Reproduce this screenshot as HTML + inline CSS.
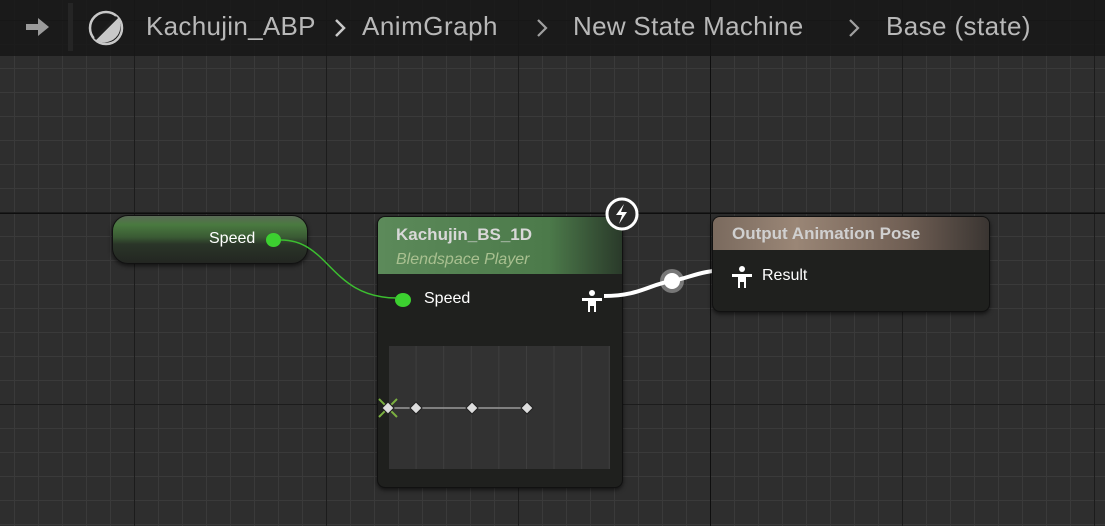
<!DOCTYPE html>
<html><head><style>
body{margin:0;width:1105px;height:526px;overflow:hidden;font-family:"Liberation Sans",sans-serif;position:relative;
background-color:#2e2e2e;
background-image:
linear-gradient(90deg,#1c1c1c 1px,transparent 1px),
linear-gradient(0deg,#1c1c1c 1px,transparent 1px),
linear-gradient(90deg,#3a3a3a 1px,transparent 1px),
linear-gradient(0deg,#3a3a3a 1px,transparent 1px);
background-size:192px 192px,192px 192px,24px 24px,24px 24px;
background-position:134px 0,0 21px,14px 0,0 21px;}
.abs{position:absolute}
.top{left:0;top:0;width:1105px;height:56px;background:rgba(22,22,22,.82);color:#b8b8b8;font-size:26px}
.top span{position:absolute;top:11px}
.chev{position:absolute;top:17px}
.node{position:absolute;background:#1f201e;border:1px solid #111;border-radius:8px;box-shadow:0 2px 4px rgba(0,0,0,.6)}
</style></head><body>
<div class="abs" style="left:710px;top:0;width:1px;height:526px;background:#0e0e0e"></div>
<div class="abs" style="left:0;top:213px;width:1105px;height:1px;background:#0e0e0e"></div>
<div class="abs top">
 <svg class="abs" style="left:24px;top:16px" width="28" height="22"><path d="M2 8h12V2l11 9-11 9v-6H2z" fill="#9a9a9a"/></svg>
 <div class="abs" style="left:68px;top:3px;width:5px;height:48px;background:#252525"></div>
 <svg class="abs" style="left:87px;top:9px" width="38" height="38"><circle cx="19" cy="19" r="16" fill="none" stroke="#c8c8c8" stroke-width="2.5"/><path d="M31 9 A16 16 0 0 1 9 31z" fill="#c8c8c8"/><line x1="8" y1="30" x2="30" y2="8" stroke="#1e1e1e" stroke-width="3"/></svg>
 <span style="left:146px;letter-spacing:0.3px">Kachujin_ABP</span>
 <svg class="chev" style="left:333px" width="14" height="22"><path d="M3 3l8 8-8 8" stroke="#c8c8c8" stroke-width="2.5" fill="none"/></svg>
 <span style="left:362px;letter-spacing:0.5px">AnimGraph</span>
 <svg class="chev" style="left:535px" width="14" height="22"><path d="M3 3l8 8-8 8" stroke="#a0a0a0" stroke-width="2.2" fill="none"/></svg>
 <span style="left:573px;letter-spacing:0.3px">New State Machine</span>
 <svg class="chev" style="left:847px" width="14" height="22"><path d="M3 3l8 8-8 8" stroke="#a0a0a0" stroke-width="2.2" fill="none"/></svg>
 <span style="left:886px;letter-spacing:0.4px">Base (state)</span>
</div>
<div class="abs" style="left:112px;top:215px;width:194px;height:47px;border-radius:16px;border:1px solid #111;background:linear-gradient(180deg,#5a6a56 0%,#4a7a40 18%,#3a5a34 45%,#2a3528 60%,#232622 100%);box-shadow:0 2px 4px rgba(0,0,0,.6)"></div>
<div class="abs" style="left:209px;top:230px;color:#fff;font-size:16px">Speed</div>
<div class="abs" style="left:266px;top:233px;width:15px;height:14px;border-radius:50%;background:#3cd030"></div>
<div class="node" style="left:377px;top:216px;width:244px;height:270px">
 <div style="height:57px;border-radius:7px 7px 0 0;background:linear-gradient(90deg,#5c8a5a,#4c7a4a 70%,#2a3a2a)"></div>
 <div class="abs" style="left:18px;top:8px;color:#d8d8d8;font-weight:bold;font-size:17px">Kachujin_BS_1D</div>
 <div class="abs" style="left:18px;top:34px;color:#a9c090;font-style:italic;font-size:16px">Blendspace Player</div>
 <div class="abs" style="left:17px;top:76px;width:16px;height:14px;border-radius:50%;background:#3cd030"></div>
 <div class="abs" style="left:46px;top:73px;color:#fff;font-size:16px">Speed</div>
 <svg class="abs" style="left:203px;top:72px" width="22" height="24"><circle cx="11" cy="4" r="3" fill="#fff"/><path d="M1 9h20v3h-6v11h-2v-6h-4v6H7V12H1z" fill="#fff"/></svg>
 <div class="abs" style="left:11px;top:129px;width:221px;height:123px;background:#323232;background-image:linear-gradient(90deg,#3e3e3e 1px,transparent 1px);background-size:27.6px 100%;background-position:-1px 0"></div>
 <svg class="abs" style="left:0;top:176px" width="170" height="30"><line x1="10" y1="15" x2="150" y2="15" stroke="#999" stroke-width="1.5"/><path d="M1 6l18 18M19 6L1 24" stroke="#7bb040" stroke-width="2"/><g fill="#ddd" stroke="#222"><path d="M10 9l6 6-6 6-6-6z"/><path d="M38 9l6 6-6 6-6-6z"/><path d="M94 9l6 6-6 6-6-6z"/><path d="M149 9l6 6-6 6-6-6z"/></g></svg>
</div>
<svg class="abs" style="left:0;top:0" width="1105" height="526">
 <path d="M281 240 C330 240 330 298 397 298" stroke="#3cbf30" stroke-width="1.5" fill="none"/>
 <path d="M604 296 C640 296 650 284 672 281 C690 278 700 270 730 270" stroke="#fff" stroke-width="4" fill="none"/>
 <circle cx="672" cy="281" r="12" fill="#fff" opacity=".35"/><circle cx="672" cy="281" r="8" fill="#fff"/>
</svg>
<svg class="abs" style="left:603px;top:195px" width="38" height="38"><circle cx="19" cy="19" r="15" fill="#2a2a2a" stroke="#fff" stroke-width="3"/><path d="M21 9l-8 11h6l-3 9 8-12h-6z" fill="#fff"/></svg>
<div class="node" style="left:712px;top:216px;width:276px;height:94px">
 <div style="height:33px;border-radius:7px 7px 0 0;background:linear-gradient(90deg,#7a6a5e,#9a8676 30%,#705f54 70%,#3a3532)"></div>
 <div class="abs" style="left:19px;top:7px;color:#d0d0d0;font-weight:bold;font-size:17px">Output Animation Pose</div>
 <svg class="abs" style="left:18px;top:48px" width="22" height="24"><circle cx="11" cy="4" r="3" fill="#fff"/><path d="M1 9h20v3h-6v11h-2v-6h-4v6H7V12H1z" fill="#fff"/></svg>
 <div class="abs" style="left:49px;top:50px;color:#fff;font-size:16px">Result</div>
</div>
</body></html>
